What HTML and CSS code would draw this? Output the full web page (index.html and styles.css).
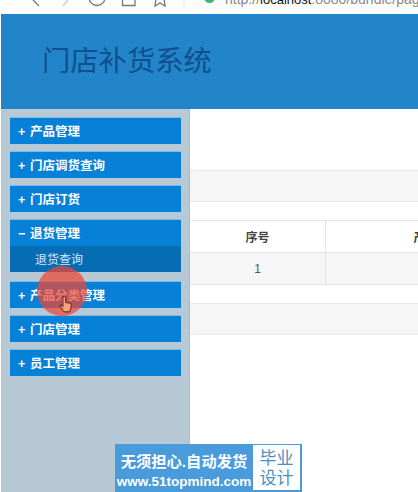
FILE: index.html
```html
<!DOCTYPE html>
<html lang="zh-CN">
<head>
    <meta charset="UTF-8">
    <meta name="viewport" content="width=device-width, initial-scale=1.0">
    <title>门店补货系统</title>
    <link rel="stylesheet" href="styles.css">
</head>
<body>
    <div class="browser-bar">
        <svg class="tool-icons" width="190" height="14" viewBox="0 0 190 14" fill="none" stroke="#777" stroke-width="1.3">
            <path d="M33 0 L39 6"/>
            <path d="M68 0 L63 6" stroke="#ccc"/>
            <circle cx="97" cy="-2.5" r="8"/>
            <path d="M122.5 -2 V5.5 H135 V-2"/>
            <path d="M156 -2 L155 6 L160 3 L165 6 L164 -2"/>
            <path d="M184 0 V8" stroke="#eee"/>
        </svg>
        <span class="secure-dot"></span>
        <span class="url">http://<b>localhost</b>:8080/bundle/page</span>
    </div>

    <header class="top">
        <h1>门店补货系统</h1>
    </header>

    <div class="main">
        <aside class="side">
            <div class="menu-item"><span class="mark">+</span>产品管理</div>
            <div class="menu-item"><span class="mark">+</span>门店调货查询</div>
            <div class="menu-item"><span class="mark">+</span>门店订货</div>
            <div class="menu-group">
                <div class="menu-item"><span class="mark">−</span>退货管理</div>
                <div class="sub-item">退货查询</div>
            </div>
            <div class="menu-item"><span class="mark">+</span>产品分类管理</div>
            <div class="menu-item"><span class="mark">+</span>门店管理</div>
            <div class="menu-item"><span class="mark">+</span>员工管理</div>
        </aside>

        <section class="content">
            <div class="band"></div>
            <table class="grid">
                <tr>
                    <th class="col-no">序号</th>
                    <th>产品名称</th>
                </tr>
                <tr class="odd">
                    <td>1</td>
                    <td></td>
                </tr>
            </table>
            <div class="band"></div>
        </section>
    </div>

    <!-- click marker from the screen recording -->
    <div class="click-mark">
        <svg width="14" height="18" viewBox="0 0 16 20">
            <path d="M5 1.5 C6 .5 7.5 1 7.5 2.5 V8 L12.5 9 C14 9.5 14.5 10.5 14 12 L13 17 C12.8 18.5 12 19 11 19 H7 C6 19 5.5 18.6 5 18 L1.5 13 C.8 12 1.8 10.8 3 11.5 L4.5 12.5 V3 Z" fill="#f4a078" stroke="#7a2a22" stroke-width="1.2"/>
        </svg>
    </div>

    <div class="promo">
        <div class="promo-left">
            <div class="promo-line">无须担心.自动发货</div>
            <div class="promo-site">www.51topmind.com</div>
        </div>
        <div class="promo-right">毕业<br>设计</div>
    </div>
</body>
</html>
```

FILE: styles.css
```css
/* General styles */
html, body {
    height: 100%;
}

body {
    margin: 0;
    overflow: hidden;
    background-color: white;
    font-family: "Liberation Sans", "Noto Sans CJK SC", sans-serif;
    display: flex;
    flex-direction: column;
}

/* Browser toolbar, cut off by the top edge */
.browser-bar {
    height: 14px;
    flex: none;
    display: flex;
    align-items: flex-start;
    overflow: hidden;
    background: #fdfdfd;
}

.tool-icons {
    flex: none;
}

.secure-dot {
    width: 11px;
    height: 11px;
    margin: -8px 0 0 14px;
    border-radius: 50%;
    background: #3cb878;
    flex: none;
}

.url {
    margin: -9px 0 0 10px;
    font-size: 14px;
    line-height: 16px;
    color: #8a8a8a;
    white-space: nowrap;
}

.url b {
    font-size: 13px;
    font-weight: normal;
    color: #111;
}

/* Header */
.top {
    height: 95px;
    flex: none;
    margin-left: 1px;
    display: flex;
    align-items: center;
    background: #2285c9;
}

.top h1 {
    margin: 0 0 6px 41px;
    font-size: 28.3px;
    font-weight: normal;
    color: #10508f;
}

/* Layout */
.main {
    flex: 1;
    display: flex;
    margin-left: 1px;
}

.side {
    width: 171px;
    flex: none;
    padding: 9px 8px 0 9px;
    display: flex;
    flex-direction: column;
    gap: 8px;
    border-right: 1px solid #a9bccc;
    background: #b8c9d6;
}

.menu-group {
    margin-bottom: 2px;
}

.menu-item {
    height: 26px;
    padding-left: 8px;
    line-height: 29px;
    font-size: 12.5px;
    font-weight: bold;
    color: white;
    background: #0780d7;
    box-shadow: 0 -1px 0 #7fbbe6;
    white-space: nowrap;
}

.mark {
    display: inline-block;
    width: 12px;
}

.sub-item {
    height: 26px;
    padding-left: 25px;
    line-height: 28px;
    font-size: 12px;
    color: #d5e8f7;
    background: #066cb4;
}

/* Content */
.content {
    flex: 1;
    min-width: 0;
    overflow: hidden;
    padding-top: 61px;
    color: #555;
}

.band {
    height: 30px;
    border-top: 1px solid #e8e8e8;
    border-bottom: 1px solid #e8e8e8;
    background: #f6f6f6;
}

.grid {
    width: 360px;
    margin: 18px 0;
    border-collapse: collapse;
    table-layout: fixed;
    font-size: 12px;
}

.grid th, .grid td {
    height: 31px;
    padding: 0;
    text-align: center;
    border-top: 1px solid #e4e4e4;
    border-bottom: 1px solid #e4e4e4;
    border-right: 1px solid #e4e4e4;
}

.grid th {
    color: #444;
}

.col-no {
    width: 135px;
}

.odd td {
    background: #f6f6f6;
}

/* Click marker over the menu */
.click-mark {
    position: absolute;
    left: 37px;
    top: 266px;
    width: 50px;
    height: 50px;
    border-radius: 50%;
    background: rgba(240, 70, 50, 0.72);
}

.click-mark svg {
    position: absolute;
    left: 22px;
    top: 29px;
}

/* Promo badge */
.promo {
    position: absolute;
    left: 115px;
    top: 444px;
    width: 187px;
    height: 48px;
    display: flex;
    background: #4a9bdc;
}

.promo-left {
    flex: 1;
    padding-top: 8px;
    text-align: center;
    color: white;
    font-weight: bold;
}

.promo-line {
    font-size: 15.3px;
    line-height: 19px;
}

.promo-site {
    margin-top: 3px;
    font-size: 13.5px;
    line-height: 16px;
}

.promo-right {
    width: 47px;
    margin: 1px 2px 2px 0;
    padding-top: 4px;
    text-align: center;
    font-size: 17px;
    line-height: 20px;
    color: #4a8fc4;
    background: white;
}
```
